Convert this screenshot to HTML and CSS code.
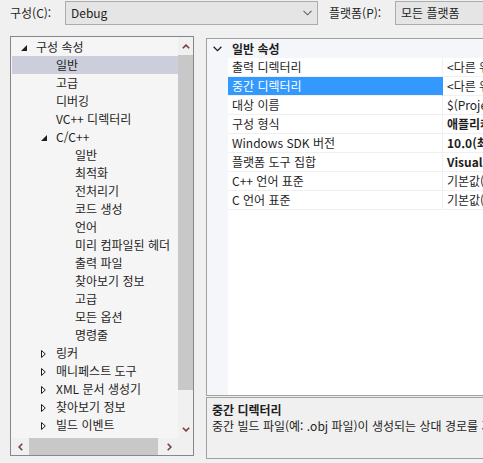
FILE: index.html
```html
<!DOCTYPE html>
<html lang="ko">
<head>
<meta charset="utf-8">
<link rel="stylesheet" href="styles.css">
</head>
<body>
<div class="page">
  <div class="toolbar">
    <span class="lbl lbl-cfg">구성(C):</span>
    <div class="combo combo-cfg">
      <span class="combo-text">Debug</span>
      <svg class="combo-chev" width="9" height="6" viewBox="0 0 9 6"><path d="M0.5 0.8 L4.5 4.8 L8.5 0.8" fill="none" stroke="#606060" stroke-width="1.1"/></svg>
    </div>
    <span class="lbl lbl-plat">플랫폼(P):</span>
    <div class="combo combo-plat">
      <span class="combo-text">모든 플랫폼</span>
    </div>
  </div>

  <div class="main">
    <div class="tree">
      <div class="tree-top">
        <div class="list">
          <div class="row l0"><span class="arr"><svg width="6" height="6" viewBox="0 0 6 6"><path d="M6 0 L6 6 L0 6 Z" fill="#1e1e1e"/></svg></span>구성 속성</div>
          <div class="row l1 sel"><span class="arr"></span>일반</div>
          <div class="row l1"><span class="arr"></span>고급</div>
          <div class="row l1"><span class="arr"></span>디버깅</div>
          <div class="row l1"><span class="arr"></span>VC++ 디렉터리</div>
          <div class="row l1"><span class="arr"><svg width="6" height="6" viewBox="0 0 6 6"><path d="M6 0 L6 6 L0 6 Z" fill="#1e1e1e"/></svg></span>C/C++</div>
          <div class="row l2"><span class="arr"></span>일반</div>
          <div class="row l2"><span class="arr"></span>최적화</div>
          <div class="row l2"><span class="arr"></span>전처리기</div>
          <div class="row l2"><span class="arr"></span>코드 생성</div>
          <div class="row l2"><span class="arr"></span>언어</div>
          <div class="row l2"><span class="arr"></span>미리 컴파일된 헤더</div>
          <div class="row l2"><span class="arr"></span>출력 파일</div>
          <div class="row l2"><span class="arr"></span>찾아보기 정보</div>
          <div class="row l2"><span class="arr"></span>고급</div>
          <div class="row l2"><span class="arr"></span>모든 옵션</div>
          <div class="row l2"><span class="arr"></span>명령줄</div>
          <div class="row l1"><span class="arr"><svg width="5" height="8" viewBox="0 0 5 8"><path d="M0.5 0.5 L4.3 4 L0.5 7.5 Z" fill="none" stroke="#1e1e1e" stroke-width="1"/></svg></span>링커</div>
          <div class="row l1"><span class="arr"><svg width="5" height="8" viewBox="0 0 5 8"><path d="M0.5 0.5 L4.3 4 L0.5 7.5 Z" fill="none" stroke="#1e1e1e" stroke-width="1"/></svg></span>매니페스트 도구</div>
          <div class="row l1"><span class="arr"><svg width="5" height="8" viewBox="0 0 5 8"><path d="M0.5 0.5 L4.3 4 L0.5 7.5 Z" fill="none" stroke="#1e1e1e" stroke-width="1"/></svg></span>XML 문서 생성기</div>
          <div class="row l1"><span class="arr"><svg width="5" height="8" viewBox="0 0 5 8"><path d="M0.5 0.5 L4.3 4 L0.5 7.5 Z" fill="none" stroke="#1e1e1e" stroke-width="1"/></svg></span>찾아보기 정보</div>
          <div class="row l1"><span class="arr"><svg width="5" height="8" viewBox="0 0 5 8"><path d="M0.5 0.5 L4.3 4 L0.5 7.5 Z" fill="none" stroke="#1e1e1e" stroke-width="1"/></svg></span>빌드 이벤트</div>
        </div>
        <div class="vscroll">
          <div class="sb-btn vbtn-up"><svg width="8" height="5" viewBox="0 0 8 5"><path d="M0.8 4.3 L4 1.1 L7.2 4.3" fill="none" stroke="#7b3f3f" stroke-width="1.6"/></svg></div>
          <div class="vthumb"></div>
          <div class="vtrack"></div>
          <div class="sb-btn vbtn-down"><svg width="8" height="5" viewBox="0 0 8 5"><path d="M0.8 0.7 L4 3.9 L7.2 0.7" fill="none" stroke="#7b3f3f" stroke-width="1.6"/></svg></div>
        </div>
      </div>
      <div class="hscroll">
        <div class="sb-btn hbtn"><svg width="5" height="8" viewBox="0 0 5 8"><path d="M4.3 0.8 L1.1 4 L4.3 7.2" fill="none" stroke="#7b3f3f" stroke-width="1.6"/></svg></div>
        <div class="hthumb"></div>
        <div class="htrack"></div>
        <div class="sb-btn hbtn"><svg width="5" height="8" viewBox="0 0 5 8"><path d="M0.7 0.8 L3.9 4 L0.7 7.2" fill="none" stroke="#7b3f3f" stroke-width="1.6"/></svg></div>
        <div class="corner"></div>
      </div>
    </div>

    <div class="right">
      <div class="grid">
        <div class="cat">
          <span class="cat-chev"><svg width="9" height="6" viewBox="0 0 9 6"><path d="M0.6 0.8 L4.5 4.7 L8.4 0.8" fill="none" stroke="#1e1e1e" stroke-width="1.3"/></svg></span>
          <span class="cat-text">일반 속성</span>
        </div>
        <div class="prop"><span class="gut"></span><span class="pname">출력 디렉터리</span><span class="pval">&lt;다른 위치에서 상속&gt;</span></div>
        <div class="prop psel"><span class="gut"></span><span class="pname">중간 디렉터리</span><span class="pval">&lt;다른 위치에서 상속&gt;</span></div>
        <div class="prop"><span class="gut"></span><span class="pname">대상 이름</span><span class="pval">$(ProjectName)</span></div>
        <div class="prop"><span class="gut"></span><span class="pname">구성 형식</span><span class="pval bold">애플리케이션(.exe)</span></div>
        <div class="prop"><span class="gut"></span><span class="pname">Windows SDK 버전</span><span class="pval bold">10.0(최신 설치된 버전)</span></div>
        <div class="prop"><span class="gut"></span><span class="pname">플랫폼 도구 집합</span><span class="pval bold">Visual Studio 2019 (v142)</span></div>
        <div class="prop"><span class="gut"></span><span class="pname">C++ 언어 표준</span><span class="pval">기본값(ISO C++14 표준)</span></div>
        <div class="prop"><span class="gut"></span><span class="pname">C 언어 표준</span><span class="pval">기본값(레거시 MSVC)</span></div>
        <div class="grid-rest"><span class="gut"></span></div>
      </div>
      <div class="desc">
        <div class="desc-title">중간 디렉터리</div>
        <div class="desc-text">중간 빌드 파일(예: .obj 파일)이 생성되는 상대 경로를 지정합니다.</div>
      </div>
    </div>
  </div>
</div>
</body>
</html>
```

FILE: styles.css
```css
* { box-sizing: border-box; }

html, body {
  margin: 0;
  padding: 0;
  background: #f0f0f0;
}

body {
  font-family: "Noto Sans CJK KR", "Noto Sans", sans-serif;
  font-size: 12px;
  color: #1e1e1e;
}

.page {
  width: 483px;
  height: 463px;
  overflow: hidden;
}

/* top toolbar */
.toolbar {
  display: flex;
  align-items: flex-start;
  height: 36px;
  padding-left: 10px;
  white-space: nowrap;
}

.toolbar > * { flex: none; }

.lbl {
  margin-top: 1px;
  height: 24px;
  line-height: 23px;
}

.lbl-cfg { width: 55px; }
.lbl-plat { width: 66px; margin-left: 11px; }

.combo {
  margin-top: 1px;
  height: 24px;
  border: 1px solid #acacac;
  background: #e5e5e5;
  display: flex;
  align-items: center;
  padding-left: 5px;
}

.combo-cfg { width: 253px; }
.combo-plat { width: 140px; }

.combo-text {
  flex: 1;
  line-height: 22px;
}

.combo-chev {
  margin-right: 5px;
}

/* main area */
.main {
  display: flex;
  align-items: flex-start;
  padding-left: 10px;
}

.tree {
  width: 184px;
  height: 420px;
  border: 1px solid #828790;
  background: #f5f5f5;
  display: flex;
  flex-direction: column;
  flex: none;
}

.tree-top {
  height: 401px;
  display: flex;
}

.list {
  width: 167px;
  padding: 1px 0 0 1px;
  white-space: nowrap;
  overflow: hidden;
}

.row {
  height: 18px;
  line-height: 18px;
  display: flex;
  align-items: center;
}

.row.sel { background: #cccedb; }

.arr {
  width: 15px;
  height: 18px;
  display: flex;
  align-items: center;
  flex: none;
}

.l0 { padding-left: 9px; }
.l1 { padding-left: 29px; }
.l2 { padding-left: 48px; }

.l0 .arr svg, .l1 .arr svg { margin-top: 1px; }

.vscroll {
  width: 15px;
  display: flex;
  flex-direction: column;
  background: #f0f0f0;
}

.sb-btn {
  display: flex;
  align-items: center;
  justify-content: center;
  flex: none;
}

.vbtn-up { height: 18px; }
.vbtn-down { height: 17px; }

.vthumb {
  height: 335px;
  background: #c8c8c8;
}

.vtrack { flex: 1; }

.hscroll {
  height: 17px;
  display: flex;
  background: #f0f0f0;
}

.hbtn { width: 18px; }

.hthumb {
  width: 129px;
  background: #c8c8c8;
}

.htrack { width: 2px; }

.corner {
  width: 15px;
  background: #f0f0f0;
}

/* right side */
.right {
  margin-left: 12px;
  margin-top: 2px;
  width: 300px;
  flex: none;
  display: flex;
  flex-direction: column;
}

.grid {
  height: 358px;
  border: 1px solid #a0a0a0;
  background: #ffffff;
  display: flex;
  flex-direction: column;
  white-space: nowrap;
  overflow: hidden;
}

.cat {
  height: 19px;
  background: #f5f6f9;
  display: flex;
  align-items: center;
  flex: none;
}

.cat-chev {
  width: 25px;
  padding-left: 6px;
  display: flex;
  align-items: center;
}

.cat-text {
  font-weight: bold;
  line-height: 19px;
}

.prop {
  height: 19px;
  display: flex;
  flex: none;
}

.gut {
  width: 21px;
  background: #f5f6f9;
  flex: none;
}

.pname {
  width: 215px;
  padding-left: 4px;
  line-height: 18px;
  border-bottom: 1px solid #f0f0f0;
  border-right: 1px solid #f0f0f0;
  overflow: hidden;
  flex: none;
}

.pval {
  flex: 1;
  padding-left: 4px;
  line-height: 18px;
  border-bottom: 1px solid #f0f0f0;
  overflow: hidden;
}

.pval.bold { font-weight: bold; }

.psel .pname {
  background: #3399ff;
  color: #ffffff;
  border-right-color: #3399ff;
}

.grid-rest {
  flex: 1;
  display: flex;
}

.desc {
  margin-top: 1px;
  height: 62px;
  border: 1px solid #a0a0a0;
  background: #f0f0f0;
  padding: 4px 0 0 5px;
  white-space: nowrap;
  overflow: hidden;
}

.desc-title {
  font-weight: bold;
  line-height: 16px;
}

.desc-text {
  line-height: 16px;
}
```
